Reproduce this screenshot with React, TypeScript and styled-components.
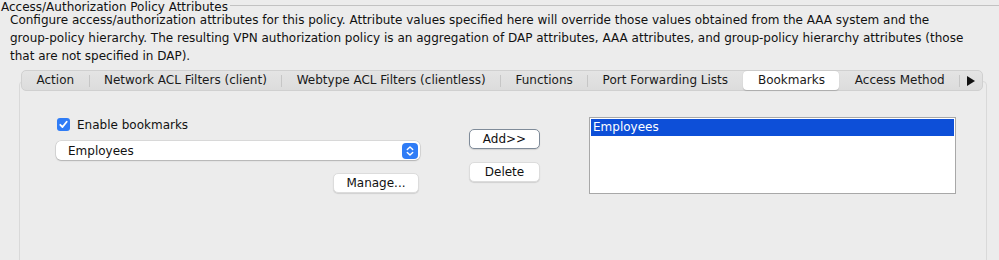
import React from 'react';
import styled, { createGlobalStyle } from 'styled-components';

const GlobalStyle = createGlobalStyle`
    html, body {
        margin: 0;
        padding: 0;
        background: #ececec;
    }
    body {
        font-family: "DejaVu Sans", "Liberation Sans", sans-serif;
        font-size: 12px;
        color: #111;
        overflow: hidden;
    }
`;

const Page = styled.div`
    width: 999px;
    height: 260px;
    overflow: hidden;
`;

const TitleRow = styled.div`
    display: flex;
    align-items: flex-start;
    height: 13px;
`;

const Title = styled.div`
    line-height: 14px;
    white-space: nowrap;
    padding-left: 1px;
`;

const Rule = styled.div`
    flex: 1;
    margin: 5px 0 0 2px;
    border-top: 1px solid #c2c2c2;
`;

const Description = styled.p`
    margin: -2px 0 0 10px;
    line-height: 18px;
    white-space: nowrap;
`;

const TabArea = styled.div`
    margin: 5px 0 0 19px;
    width: 968px;
`;

const TabBar = styled.div`
    position: relative;
    z-index: 1;
    display: flex;
    align-items: center;
    height: 21px;
    margin: 0 4px 0 2px;
    box-sizing: border-box;
    background: linear-gradient(#e4e4e4, #dcdcdc);
    border: 1px solid #d0d0d0;
    border-radius: 5px;
    color: #1a1a1a;
`;

const Tab = styled.div<{ $selected?: boolean }>`
    padding: 0 14.5px;
    height: 19px;
    line-height: 19px;
    white-space: nowrap;
    border-radius: 4px;
    background: ${({ $selected }) => ($selected ? '#ffffff' : 'transparent')};
    box-shadow: ${({ $selected }) => ($selected ? '0 0.5px 1px rgba(0,0,0,0.18)' : 'none')};
`;

const Separator = styled.div<{ $hidden?: boolean }>`
    width: 1px;
    height: 12px;
    background: ${({ $hidden }) => ($hidden ? 'transparent' : '#c6c6c6')};
`;

const MoreArrow = styled.div`
    display: flex;
    align-items: center;
    padding: 0 7px 0 7px;
`;

const Panel = styled.div`
    margin-top: -10px;
    height: 200px;
    box-sizing: border-box;
    border: 1px solid #d9d9d9;
    border-radius: 4px;
    background: #ececec;
    padding: 35px 0 0 36px;
    display: grid;
    grid-template-columns: 364px 71px 367px;
    column-gap: 49px;
    align-items: start;
`;

const LeftColumn = styled.div`
    display: flex;
    flex-direction: column;
`;

const CheckRow = styled.label`
    display: flex;
    align-items: center;
    gap: 7px;
    margin: 1px 0 0 1px;
    height: 13px;
`;

const CheckBox = styled.span`
    width: 13px;
    height: 13px;
    border-radius: 3px;
    background: #2f7cf6;
    display: flex;
    align-items: center;
    justify-content: center;
`;

const Select = styled.div`
    margin-top: 10px;
    height: 19px;
    display: flex;
    align-items: center;
    justify-content: space-between;
    padding: 0 2px 0 12px;
    background: #fff;
    border-radius: 5px;
    box-shadow: 0 0 0 0.5px rgba(0, 0, 0, 0.16), 0 1px 1.5px rgba(0, 0, 0, 0.18);
`;

const Stepper = styled.span`
    width: 16px;
    height: 16px;
    border-radius: 4px;
    background: #2f7cf6;
    display: flex;
`;

const Button = styled.button<{ $default?: boolean; $width: number }>`
    font: inherit;
    color: #111;
    width: ${({ $width }) => $width}px;
    height: 20px;
    padding: 0;
    line-height: 18px;
    background: #fff;
    border-radius: 5px;
    border: 1px solid ${({ $default }) => ($default ? '#7f8b99' : '#dcdcdc')};
    box-shadow: 0 1px 1px rgba(0, 0, 0, 0.12);
`;

const ManageButton = styled(Button)`
    align-self: flex-end;
    margin: 13px 1px 0 0;
`;

const MiddleColumn = styled.div`
    display: flex;
    flex-direction: column;
    padding-top: 12px;
    gap: 13px;
`;

const List = styled.div`
    height: 77px;
    box-sizing: border-box;
    background: #fff;
    border: 1px solid #a8a8a8;
    padding: 1px;
`;

const ListRow = styled.div<{ $selected?: boolean }>`
    height: 17px;
    line-height: 17px;
    padding-left: 2px;
    background: ${({ $selected }) => ($selected ? '#0d4fd8' : 'transparent')};
    color: ${({ $selected }) => ($selected ? '#fff' : '#111')};
`;

const tabs = [
    'Action',
    'Network ACL Filters (client)',
    'Webtype ACL Filters (clientless)',
    'Functions',
    'Port Forwarding Lists',
    'Bookmarks',
    'Access Method',
];
const selectedTab = 5;

export default function App() {
    return (
        <Page>
            <GlobalStyle />
            <TitleRow>
                <Title>Access/Authorization Policy Attributes</Title>
                <Rule />
            </TitleRow>
            <Description>
                Configure access/authorization attributes for this policy. Attribute values specified here will override those values obtained from the AAA system and the
                <br />
                group-policy hierarchy. The resulting VPN authorization policy is an aggregation of DAP attributes, AAA attributes, and group-policy hierarchy attributes (those
                <br />
                that are not specified in DAP).
            </Description>
            <TabArea>
                <TabBar>
                    {tabs.map((t, i) => (
                        <React.Fragment key={t}>
                            {i > 0 && <Separator $hidden={i === selectedTab || i - 1 === selectedTab} />}
                            <Tab $selected={i === selectedTab}>{t}</Tab>
                        </React.Fragment>
                    ))}
                    <Separator />
                    <MoreArrow>
                        <svg width="8" height="10" viewBox="0 0 8 10">
                            <polygon points="0,0 8,5 0,10" fill="#111" />
                        </svg>
                    </MoreArrow>
                </TabBar>
                <Panel>
                    <LeftColumn>
                        <CheckRow>
                            <CheckBox>
                                <svg width="11" height="11" viewBox="0 0 11 11">
                                    <path d="M2.3 5.8 L4.5 8 L8.7 2.8" fill="none" stroke="#fff" strokeWidth="1.8" strokeLinecap="round" strokeLinejoin="round" />
                                </svg>
                            </CheckBox>
                            Enable bookmarks
                        </CheckRow>
                        <Select>
                            Employees
                            <Stepper>
                                <svg width="16" height="16" viewBox="0 0 16 16">
                                    <path d="M5.3 6.5 L8 3.9 L10.7 6.5 M5.3 9.5 L8 12.1 L10.7 9.5" fill="none" stroke="#fff" strokeWidth="1.4" strokeLinecap="round" strokeLinejoin="round" />
                                </svg>
                            </Stepper>
                        </Select>
                        <ManageButton $width={86}>Manage...</ManageButton>
                    </LeftColumn>
                    <MiddleColumn>
                        <Button $default $width={71}>Add&gt;&gt;</Button>
                        <Button $width={71}>Delete</Button>
                    </MiddleColumn>
                    <List>
                        <ListRow $selected>Employees</ListRow>
                    </List>
                </Panel>
            </TabArea>
        </Page>
    );
}
